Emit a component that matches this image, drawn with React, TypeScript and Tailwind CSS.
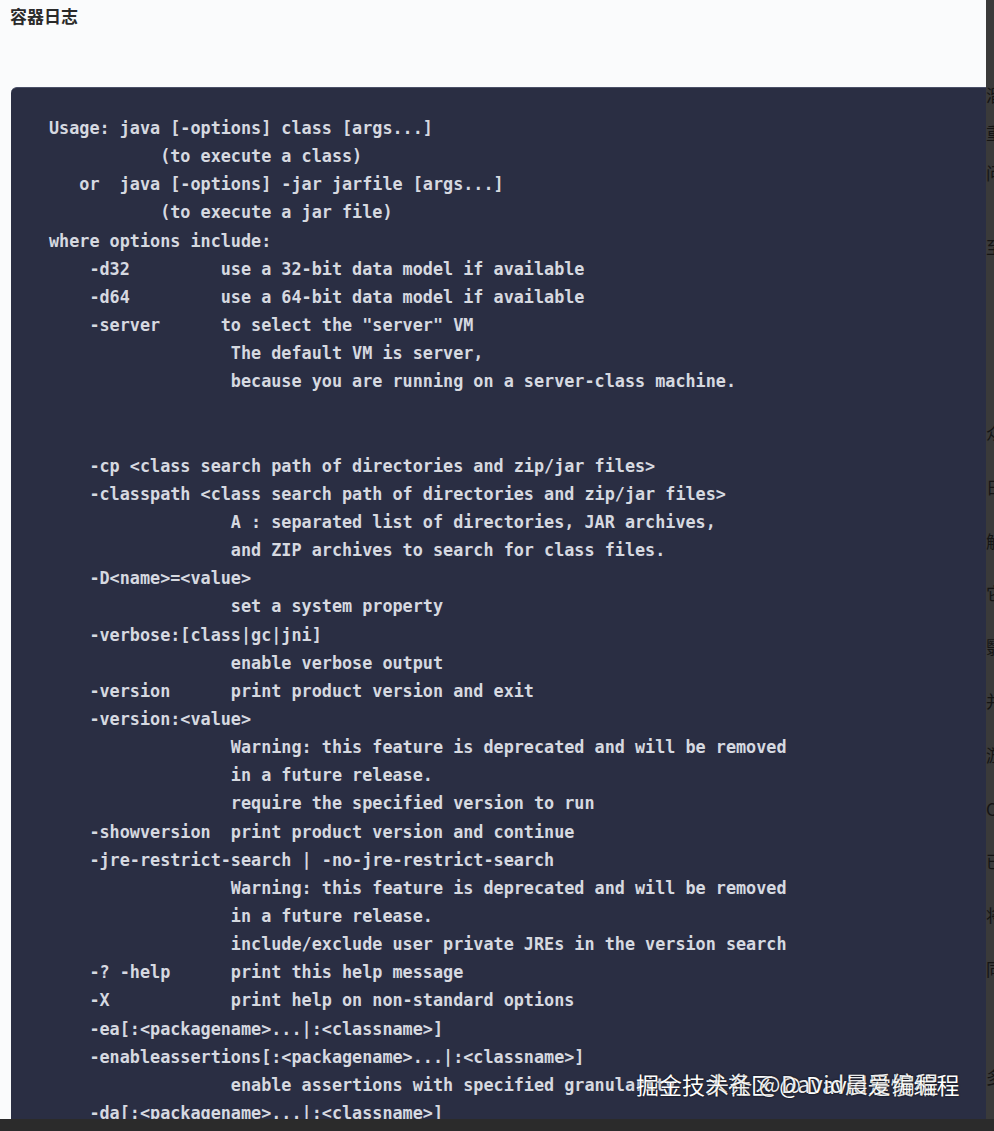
import React from "react";

const LOG_LINES: string[] = [
  "Usage: java [-options] class [args...]",
  "           (to execute a class)",
  "   or  java [-options] -jar jarfile [args...]",
  "           (to execute a jar file)",
  "where options include:",
  "    -d32         use a 32-bit data model if available",
  "    -d64         use a 64-bit data model if available",
  "    -server      to select the \"server\" VM",
  "                  The default VM is server,",
  "                  because you are running on a server-class machine.",
  "",
  "",
  "    -cp <class search path of directories and zip/jar files>",
  "    -classpath <class search path of directories and zip/jar files>",
  "                  A : separated list of directories, JAR archives,",
  "                  and ZIP archives to search for class files.",
  "    -D<name>=<value>",
  "                  set a system property",
  "    -verbose:[class|gc|jni]",
  "                  enable verbose output",
  "    -version      print product version and exit",
  "    -version:<value>",
  "                  Warning: this feature is deprecated and will be removed",
  "                  in a future release.",
  "                  require the specified version to run",
  "    -showversion  print product version and continue",
  "    -jre-restrict-search | -no-jre-restrict-search",
  "                  Warning: this feature is deprecated and will be removed",
  "                  in a future release.",
  "                  include/exclude user private JREs in the version search",
  "    -? -help      print this help message",
  "    -X            print help on non-standard options",
  "    -ea[:<packagename>...|:<classname>]",
  "    -enableassertions[:<packagename>...|:<classname>]",
  "                  enable assertions with specified granularity",
  "    -da[:<packagename>...|:<classname>]",
];

// partial glyphs of the neighbouring page, clipped at the right edge
const SIDE_CHARS: { ch: string; mt: string }[] = [
  { ch: "溜", mt: "mt-[86px]" },
  { ch: "重", mt: "mt-[20px]" },
  { ch: "问", mt: "mt-[22px]" },
  { ch: "至", mt: "mt-[56px]" },
  { ch: "众", mt: "mt-[168px]" },
  { ch: "日", mt: "mt-[36px]" },
  { ch: "解", mt: "mt-[36px]" },
  { ch: "它", mt: "mt-[34px]" },
  { ch: "翳", mt: "mt-[36px]" },
  { ch: "并", mt: "mt-[36px]" },
  { ch: "游", mt: "mt-[36px]" },
  { ch: "C", mt: "mt-[36px]" },
  { ch: "已", mt: "mt-[34px]" },
  { ch: "将", mt: "mt-[36px]" },
  { ch: "同", mt: "mt-[36px]" },
  { ch: "多", mt: "mt-[90px]" },
];

const SideStrip: React.FC = () => (
  <div className="w-[8px] shrink-0 overflow-hidden bg-[#3a3a3a]">
    <div className="flex w-[20px] flex-col text-[17px] leading-[18px] text-[#151515] [font-family:'Noto_Sans_CJK_SC',sans-serif]">
      {SIDE_CHARS.map((c, i) => (
        <span key={i} className={c.mt}>
          {c.ch}
        </span>
      ))}
    </div>
  </div>
);

// two overlapping reposted watermarks
const Watermark: React.FC = () => (
  <div className="pointer-events-none absolute left-[636px] top-[1066px] text-[23px] leading-[36px] text-white [font-family:'Noto_Sans_CJK_SC',sans-serif] [text-shadow:0_0_2px_rgba(0,0,0,0.9)]">
    <span className="whitespace-pre">掘金技术社区 @ David是慢编程</span>
    <span className="absolute left-[70px] top-[-1px] whitespace-pre tracking-[0.5px] opacity-90">
      头条 @David晨爱编程
    </span>
  </div>
);

export default function App() {
  return (
    <div className="relative flex h-[1131px] w-[994px] flex-col overflow-hidden bg-[#2b2b2b]">
      <div className="flex min-h-0 flex-1">
        <div className="flex min-w-0 flex-1 flex-col bg-[#fafbfc]">
          <div className="h-[87px] shrink-0 px-[10px] pt-[4px]">
            <div className="text-[17px] font-semibold leading-[24px] text-[#2a2a2a] [font-family:'Noto_Sans_CJK_SC',sans-serif]">
              容器日志
            </div>
          </div>
          <div className="ml-[11px] min-h-0 flex-1 overflow-hidden rounded-tl-[6px] border-t border-[#4a5068] bg-[#2a2e43] pl-[38px] pt-[26px]">
            <pre className="text-[16.8px] font-bold leading-[28.15px] text-[#d6d9e0] [font-family:'DejaVu_Sans_Mono',monospace]">
              {LOG_LINES.map((l, i) => (
                <div key={i} className="h-[28.15px]">
                  {l}
                </div>
              ))}
            </pre>
          </div>
        </div>
        <SideStrip />
      </div>
      <div className="h-[12px] shrink-0 bg-[#2b2b2b]" />
      <Watermark />
    </div>
  );
}
